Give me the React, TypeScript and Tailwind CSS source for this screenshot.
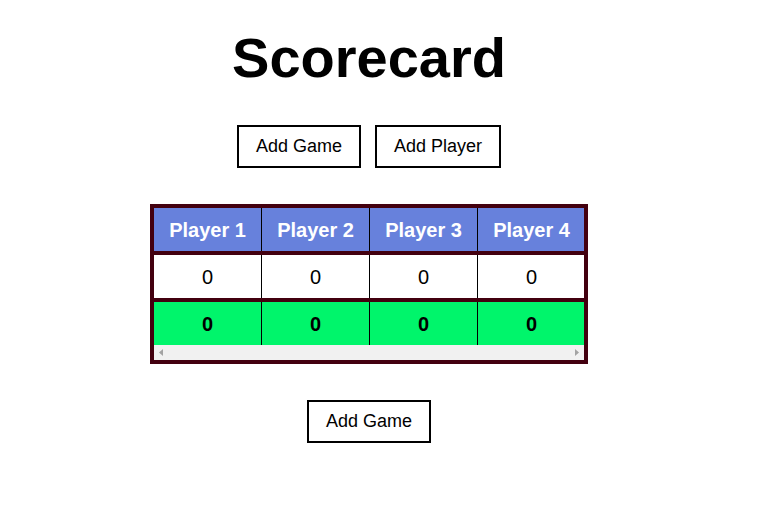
const players = ["Player 1", "Player 2", "Player 3", "Player 4"];
const scores = [0, 0, 0, 0];

const Button = ({ children }: { children: string }) => (
  <button className="h-[43px] px-[17px] border-2 border-black bg-white text-[18px] text-black">
    {children}
  </button>
);

const App = () => {
  return (
    <div className="w-[738px] flex flex-col items-center font-['Liberation_Sans',Arial,sans-serif] text-black">
      <h1 className="mt-[30px] text-[56px] font-bold leading-none">Scorecard</h1>

      <div className="mt-[39px] flex gap-[14px]">
        <Button>Add Game</Button>
        <Button>Add Player</Button>
      </div>

      <div className="mt-[36px] w-[438px] border-4 border-[#43000f] overflow-hidden">
        <div className="w-[432px]">
          <div className="flex h-[47px] border-b-4 border-[#43000f] bg-[#6781dc]">
            {players.map((p) => (
              <div
                key={p}
                className="w-[108px] shrink-0 flex items-center justify-center border-r border-black text-[20px] font-bold text-white"
              >
                {p}
              </div>
            ))}
          </div>
          <div className="flex h-[47px] border-b-4 border-[#43000f] bg-white">
            {scores.map((s, i) => (
              <div
                key={i}
                className="w-[108px] shrink-0 flex items-center justify-center border-r border-black text-[20px]"
              >
                {s}
              </div>
            ))}
          </div>
          <div className="flex h-[43px] bg-[#00f56b]">
            {scores.map((s, i) => (
              <div
                key={i}
                className="w-[108px] shrink-0 flex items-center justify-center border-r border-black text-[20px] font-bold"
              >
                {s}
              </div>
            ))}
          </div>
        </div>
        {/* horizontal scrollbar */}
        <div className="h-[15px] bg-[#f1f1f1] flex items-center justify-between px-[5px]">
          <svg width="4" height="7" viewBox="0 0 4 7">
            <path d="M4 0 L0 3.5 L4 7 Z" fill="#a3a3a3" />
          </svg>
          <svg width="4" height="7" viewBox="0 0 4 7">
            <path d="M0 0 L4 3.5 L0 7 Z" fill="#a3a3a3" />
          </svg>
        </div>
      </div>

      <div className="mt-[36px]">
        <Button>Add Game</Button>
      </div>
    </div>
  );
};

export default App;
